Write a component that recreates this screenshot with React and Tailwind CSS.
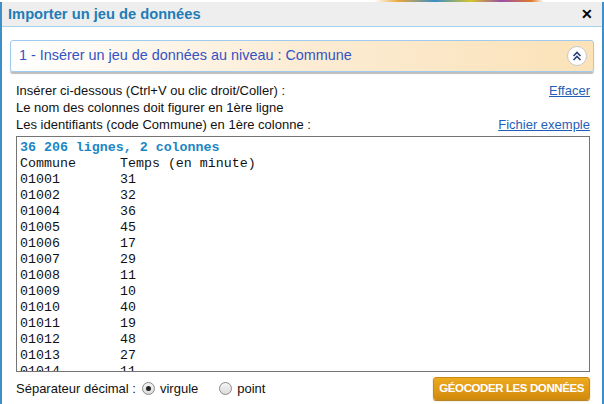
import { useState } from "react";

const rows = [
  ["01001", "31"],
  ["01002", "32"],
  ["01004", "36"],
  ["01005", "45"],
  ["01006", "17"],
  ["01007", "29"],
  ["01008", "11"],
  ["01009", "10"],
  ["01010", "40"],
  ["01011", "19"],
  ["01012", "48"],
  ["01013", "27"],
  ["01014", "11"],
];

const Radio = ({ checked, label, onClick }) => (
  <label className="flex items-center gap-[5px] cursor-pointer" onClick={onClick}>
    <span className="w-[13px] h-[13px] rounded-full border border-[#8a8a8a] bg-gradient-to-b from-[#f4f4f4] to-[#dcdcdc] flex items-center justify-center">
      {checked && <span className="w-[5px] h-[5px] rounded-full bg-[#222]" />}
    </span>
    <span>{label}</span>
  </label>
);

export default function App() {
  const [sep, setSep] = useState("virgule");

  return (
    <div className="w-[604px] h-[404px] overflow-hidden bg-white font-['Liberation_Sans',Arial,sans-serif] text-[13px] text-[#111]">
      <div className="h-[2px] bg-[linear-gradient(90deg,#fff_0,#fff_62%,#e8a73a_66%,#3a8fc8_72%,#d6c42a_78%,#9a4fa8_83%,#e07a2a_88%,#fff_90%,#fff_100%)]" />
      <div className="h-[402px] border-x-[2px] border-[#3d8fc6] flex flex-col">
        {/* Title bar */}
        <div className="h-[25px] bg-[#eeeeee] border-b border-[#a9d3ef] flex items-center justify-between pl-[6px] pr-[9px]">
          <span className="text-[14.7px] font-bold text-[#1f7cb8]">Importer un jeu de données</span>
          <span className="text-[14px] font-bold text-black leading-none">✕</span>
        </div>

        <div className="px-[8px] pt-[13px]">
          {/* Accordion header */}
          <div className="h-[32px] rounded-[3px] border border-[#9fcbf0] shadow-[0_2px_1px_#bdbdbd] bg-gradient-to-r from-white via-[#fcecd4] to-[#fbe2b8] flex items-center justify-between pl-[8px] pr-[6px]">
            <span className="text-[14.4px] text-[#3453c4]">1 - Insérer un jeu de données au niveau : Commune</span>
            <span className="w-[20px] h-[20px] rounded-full bg-white border border-[#c9c9c9] flex items-center justify-center">
              <svg width="12" height="12" viewBox="0 0 12 12" fill="none" stroke="#27407a" strokeWidth="1.6">
                <path d="M2.5 6 6 2.5 9.5 6" />
                <path d="M2.5 10 6 6.5 9.5 10" />
              </svg>
            </span>
          </div>
        </div>

        <div className="pl-[14px] pr-[12px] pt-[10px] leading-[17px]">
          <div className="flex justify-between">
            <span>Insérer ci-dessous (Ctrl+V ou clic droit/Coller) :</span>
            <a className="underline text-[#1f5fb8]">Effacer</a>
          </div>
          <div>Le nom des colonnes doit figurer en 1ère ligne</div>
          <div className="flex justify-between">
            <span>Les identifiants (code Commune) en 1ère colonne :</span>
            <a className="underline text-[#1f5fb8]">Fichier exemple</a>
          </div>

          {/* Textarea */}
          <div className="mt-[3px] h-[236px] border border-[#747474] overflow-hidden pl-[3px] pt-[3px] font-['Liberation_Mono','Courier_New',monospace] text-[13.3px] leading-[16px] whitespace-pre text-[#111]">
            <div className="font-bold text-[#1c86c4]">36 206 lignes, 2 colonnes</div>
            <div className="flex">
              <span className="w-[100px]">Commune</span>
              <span>Temps (en minute)</span>
            </div>
            {rows.map(([c, t]) => (
              <div key={c} className="flex">
                <span className="w-[100px]">{c}</span>
                <span>{t}</span>
              </div>
            ))}
          </div>

          {/* Bottom row */}
          <div className="flex items-center justify-between mt-[5px]">
            <div className="flex items-center">
              <span className="mr-[6px]">Séparateur décimal :</span>
              <Radio checked={sep === "virgule"} label="virgule" onClick={() => setSep("virgule")} />
              <span className="w-[21px]" />
              <Radio checked={sep === "point"} label="point" onClick={() => setSep("point")} />
            </div>
            <button className="h-[23px] px-[5px] rounded-[3px] border border-[#c88a10] bg-gradient-to-b from-[#eeaa22] to-[#d38c0a] text-white font-bold text-[11.5px] tracking-[-0.4px] shadow-[0_1px_1px_#b07a10]">
              GÉOCODER LES DONNÉES
            </button>
          </div>
        </div>
      </div>
    </div>
  );
}
